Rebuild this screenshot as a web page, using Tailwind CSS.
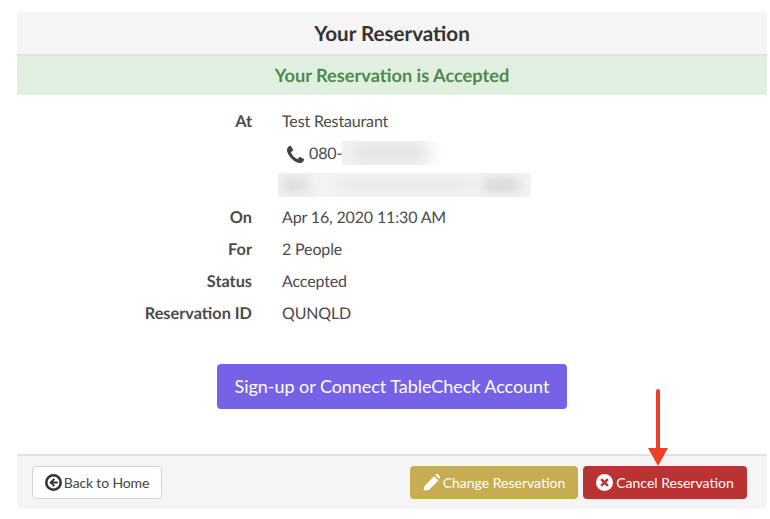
<!DOCTYPE html>
<html lang="en">
<head>
    <meta charset="UTF-8">
    <title>Your Reservation</title>
    <script src="https://cdn.jsdelivr.net/npm/@tailwindcss/browser@4"></script>
</head>
<body class="bg-white text-[#4a4a4a] font-['Lato',sans-serif] text-[16px] [text-rendering:geometricPrecision] antialiased w-[770px] h-[519px] overflow-hidden relative">
    <div class="ml-[17px] mt-[12px] w-[750px] h-[497px] flex flex-col">
        <header class="h-[44px] shrink-0 pt-[2px] bg-[#f5f5f5] border-b-2 border-[#e2e2e2] rounded-t-[4px] flex items-center justify-center">
            <h1 class="text-[20.6px] font-bold text-[#333333]">Your Reservation</h1>
        </header>
        <div class="h-[39px] shrink-0 bg-[#e1efe0] flex items-center justify-center text-[18.2px] font-bold text-[#4f8a4c]">Your Reservation is Accepted</div>

        <dl class="pt-[11px] grid grid-cols-[235px_1fr] gap-x-[30px] auto-rows-[32px] items-center tracking-[-0.15px]">
            <dt class="text-right font-bold text-[16.3px] tracking-normal">At</dt>
            <dd>Test Restaurant</dd>
            <dd class="col-start-2 flex items-center pl-[5px]">
                <svg class="w-[17px] h-[17px] mr-[5px] fill-[#444444]" viewBox="0 0 1408 1408"><path d="M1408 1112q0 27-10 70.5t-21 68.5q-21 50-122 106-94 51-186 51-27 0-53-3.500t-57.500-12.500-47-14.500-55.500-20.500-49-18q-98-35-175-83-127-79-264-216T152 776q-48-77-83-175-3-9-18-49t-20.500-55.500T16 449 3.500 391.500 0 338q0-92 51-186 56-101 106-122 25-11 68.500-21T296 0q14 0 21 3 18 6 53 76 11 19 30 54t35 63.500 31 53.500q3 4 17.500 25t21.500 35.500 7 28.500q0 20-28.500 50t-62 55-62 53-28.500 46q0 9 5 22.500t8.500 20.500 14 24 11.500 19q76 137 174 235t235 174q2 1 19 11.500t24 14 20.500 8.500 22.500 5q18 0 46-28.500t53-62 55-62 50-28.500q14 0 28.500 7t35.500 21.500 25 17.500q25 15 53.500 31t63.500 35 54 30q70 35 76 53 3 7 3 21z"/></svg>
                <span>080-</span>
                <span class="relative w-[102px] h-[24px] -translate-y-px overflow-hidden bg-gradient-to-r from-[#f2f2f2] from-70% to-white"><span class="absolute left-[12px] top-[6px] w-[72px] h-[12px] bg-[#dedede] blur-[7px]"></span></span>
            </dd>
            <dd class="col-start-2 -ml-[4px] -translate-y-px relative w-[253px] h-[24px] overflow-hidden bg-[#f3f3f3]">
                <span class="absolute left-[4px] top-[6px] w-[26px] h-[12px] bg-[#d6d6d6] blur-[6px]"></span>
                <span class="absolute left-[60px] top-[8px] w-[130px] h-[8px] bg-[#e4e4e4] blur-[6px]"></span>
                <span class="absolute left-[205px] top-[6px] w-[36px] h-[12px] bg-[#d2d2d2] blur-[6px]"></span>
            </dd>
            <dt class="text-right font-bold text-[16.3px] tracking-normal">On</dt>
            <dd>Apr 16, 2020 11:30 AM</dd>
            <dt class="text-right font-bold text-[16.3px] tracking-normal">For</dt>
            <dd>2 People</dd>
            <dt class="text-right font-bold text-[16.3px] tracking-normal">Status</dt>
            <dd>Accepted</dd>
            <dt class="text-right font-bold text-[16.3px] tracking-normal">Reservation ID</dt>
            <dd>QUNQLD</dd>
        </dl>

        <div class="mt-[34px] flex justify-center">
            <button class="w-[350px] h-[45px] bg-[#7662e6] rounded-[4px] text-white text-[18px] tracking-[-0.05px]">Sign-up or Connect TableCheck Account</button>
        </div>

        <footer class="mt-auto h-[55px] bg-[#f5f5f5] border-t-2 border-[#e2e2e2] rounded-b-[4px] pl-[15px] pr-[20px] pt-[10px] flex items-start justify-between text-[14px]">
            <button class="w-[130px] h-[33px] bg-white border border-[#d4d4d4] rounded-[4px] flex items-center justify-center text-[#444444] tracking-[-0.15px]">
                <svg class="w-[17px] h-[17px] mr-[2px]" viewBox="0 0 16 16"><circle cx="8" cy="8" r="6.800" fill="none" stroke="#333333" stroke-width="2.400"/><path d="M8.200 3.900 4.100 8l4.100 4.100 1.300-1.300-1.900-1.800h4.400V7H7.600l1.900-1.800z" fill="#333333"/></svg>
                Back to Home
            </button>
            <div class="flex gap-[5px]">
                <button class="w-[168px] h-[33px] bg-[#c8ac52] rounded-[4px] text-white flex items-center justify-center">
                    <svg class="w-[17px] h-[17px] mr-[3px] fill-white" viewBox="0 0 16 16"><path d="M0.500 15.500 1.500 11 10.500 2l4 4-9 9zM11.500 1l1-0.800c.5-.3 1-.3 1.400.1l2 2c.4.4.4 .9.1 1.400l-.8 1z"/></svg>
                    Change Reservation
                </button>
                <button class="w-[164px] h-[33px] bg-[#b83331] rounded-[4px] text-white flex items-center justify-center">
                    <svg class="w-[17px] h-[17px] mr-[3px]" viewBox="0 0 16 16"><circle cx="8" cy="8" r="8" fill="#ffffff"/><path d="M5.600 4 8 6.400 10.400 4 12 5.600 9.600 8 12 10.400 10.400 12 8 9.600 5.600 12 4 10.400 6.400 8 4 5.600z" fill="#b83331"/></svg>
                    Cancel Reservation
                </button>
            </div>
        </footer>
    </div>

    <!-- annotation arrow drawn over the page -->
    <svg class="absolute left-[645px] top-[388px] w-[26px] h-[80px]" viewBox="0 0 26 80">
        <path d="M13 3V62" stroke="#ee4027" stroke-width="4" stroke-linecap="round" fill="none"/>
        <path d="M3 60H23L13 78z" fill="#ee4027"/>
    </svg>
</body>
</html>
